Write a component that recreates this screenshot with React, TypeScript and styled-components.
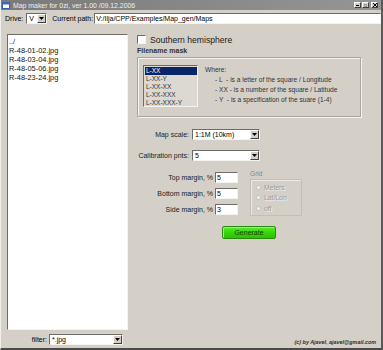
import React from "react"
import styled, { createGlobalStyle } from "styled-components"

const GlobalStyle = createGlobalStyle`
    html, body {
        margin: 0;
        padding: 0;
        background: #d4d0c8;
    }
    body {
        font-family: "Liberation Sans", Arial, sans-serif;
    }
`

const Window = styled.div`
    width: 383px;
    height: 350px;
    box-sizing: border-box;
    display: flex;
    flex-direction: column;
    background: #d4d0c8;
    border-left: 1px solid #f2f0ec;
    border-right: 2px solid #5a5a5a;
    border-bottom: 2px solid #4a4a4a;
    font-family: "Liberation Sans", Arial, sans-serif;
    font-size: 7px;
    color: #000;
`

const TitleBar = styled.div`
    height: 10px;
    display: flex;
    align-items: center;
    padding: 0 2px 0 1px;
    background: linear-gradient(to right, #7a7a7a, #959595);
    color: #f0f0f0;
    font-size: 6.9px;
    white-space: nowrap;
`

const TitleText = styled.span`
    margin-left: 3px;
    flex: 1;
`

const TitleButtons = styled.div`
    display: flex;
    gap: 1px;
    margin-right: 1px;
`

const TitleButton = styled.div<{ $gap?: boolean }>`
    width: 7px;
    height: 6px;
    box-sizing: border-box;
    background: #d4d0c8;
    border: 1px solid;
    border-color: #fff #404040 #404040 #fff;
    margin-left: ${(p) => (p.$gap ? "1px" : "0")};
    display: flex;
    align-items: center;
    justify-content: center;
`

const PathRow = styled.div`
    height: 17px;
    display: flex;
    align-items: center;
    padding-left: 4px;
    white-space: nowrap;
`

const Label = styled.span<{ $ml?: number }>`
    margin-left: ${(p) => p.$ml || 0}px;
    white-space: nowrap;
`

const Sunken = styled.div`
    box-sizing: border-box;
    background: #fff;
    border: 1px solid;
    border-color: #6e6c68 #f4f3f0 #f4f3f0 #6e6c68;
`

const TextBox = styled(Sunken)<{ $w?: number }>`
    height: 11px;
    width: ${(p) => (p.$w ? `${p.$w}px` : "auto")};
    flex: ${(p) => (p.$w ? "none" : "1")};
    padding-left: 1px;
    line-height: 9px;
    font-size: 7px;
    overflow: hidden;
    white-space: nowrap;
`

const SelectBox = styled(Sunken)<{ $w: number }>`
    width: ${(p) => p.$w}px;
    height: 11px;
    display: flex;
    align-items: stretch;
    line-height: 9px;
    font-size: 7px;
`

const SelectValue = styled.span`
    flex: 1;
    padding-left: 2px;
    overflow: hidden;
    white-space: nowrap;
`

const ArrowButton = styled.div`
    width: 9px;
    box-sizing: border-box;
    background: #d4d0c8;
    border: 1px solid;
    border-color: #fff #404040 #404040 #fff;
    display: flex;
    align-items: center;
    justify-content: center;
`

const Body = styled.div`
    flex: 1;
    display: flex;
    padding-top: 7px;
    min-height: 0;
`

const LeftColumn = styled.div`
    width: 121px;
    margin-left: 6px;
    display: flex;
    flex-direction: column;
`

const FileList = styled(Sunken)`
    flex: 1;
    padding: 2px 0 0 1px;
    font-size: 7.4px;
    line-height: 9px;
    color: #111;
`

const FilterRow = styled.div`
    height: 18px;
    display: flex;
    align-items: center;
    justify-content: flex-end;
    padding-right: 5px;
    gap: 2px;
`

const RightColumn = styled.div`
    flex: 1;
    margin-left: 9px;
    display: flex;
    flex-direction: column;
`

const CheckRow = styled.div`
    display: flex;
    align-items: center;
    margin-top: 1px;
    height: 9px;
`

const CheckBox = styled(Sunken)`
    width: 9px;
    height: 9px;
`

const CheckLabel = styled.span`
    margin-left: 4px;
    font-size: 8.6px;
    color: #1a1a1a;
`

const SectionTitle = styled.div`
    margin-top: 3px;
    font-size: 7px;
    font-weight: bold;
    line-height: 8px;
    color: #333;
`

const MaskGroup = styled.div`
    width: 224px;
    height: 60px;
    box-sizing: border-box;
    margin-top: 2px;
    border: 1px solid #a9a6a0;
    box-shadow: inset 1px 1px 0 #f4f3f0, 1px 1px 0 #f4f3f0;
    display: flex;
    align-items: flex-start;
    padding: 7px 0 0 5px;
`

const MaskList = styled(Sunken)`
    width: 55px;
    height: 42px;
    background: #dcd9d3;
    padding: 1px 0 0 1px;
    font-size: 6.5px;
    line-height: 8px;
    color: #333;
`

const MaskItem = styled.div<{ $selected?: boolean }>`
    padding-left: 1px;
    height: 8px;
    background: ${(p) => (p.$selected ? "#0a246a" : "transparent")};
    color: ${(p) => (p.$selected ? "#fff" : "inherit")};
`

const Legend = styled.div`
    margin-left: 7px;
    font-size: 6.6px;
    line-height: 10px;
    color: #333;
`

const LegendLine = styled.div`
    margin-left: 10px;
    white-space: pre;
`

const FormGrid = styled.div`
    margin-top: 12px;
    display: grid;
    grid-template-columns: 52px auto;
    column-gap: 3px;
    row-gap: 10px;
    align-items: center;
    justify-content: start;
`

const RightLabel = styled.span`
    text-align: right;
    white-space: nowrap;
    color: #1a1a1a;
`

const MarginSection = styled.div`
    margin-top: 9px;
    display: flex;
    align-items: flex-start;
`

const MarginGrid = styled.div`
    margin-top: 2px;
    display: grid;
    grid-template-columns: 76px 23px;
    column-gap: 2px;
    row-gap: 5px;
    align-items: center;
`

const GridPart = styled.div`
    margin-left: 12px;
    display: flex;
    flex-direction: column;
`

const GridTitle = styled.div`
    line-height: 7px;
    color: #8a8781;
    font-size: 6.6px;
`

const GridGroup = styled.div`
    margin-top: 2px;
    width: 52px;
    height: 37px;
    box-sizing: border-box;
    border: 1px solid #c2bfb9;
    box-shadow: inset 1px 1px 0 #ebe9e5;
    padding: 2px 0 0 5px;
`

const RadioRow = styled.div`
    display: flex;
    align-items: center;
    height: 10.5px;
    color: #9e9b95;
    text-shadow: 1px 1px 0 #f1f0ec;
    font-size: 6.8px;
`

const RadioDot = styled.span`
    width: 5px;
    height: 5px;
    border-radius: 50%;
    background: #f4f3f0;
    border: 1px solid #c3c0ba;
    box-sizing: border-box;
    margin-right: 3px;
`

const GenerateButton = styled.div`
    margin: 10px 0 0 85px;
    width: 54px;
    height: 13px;
    box-sizing: border-box;
    border: 1px solid #2b8a10;
    border-radius: 2px;
    background: linear-gradient(#5cec2c, #33d40b 55%, #2cc106);
    box-shadow: inset 1px 1px 0 #8ff56a;
    display: flex;
    align-items: center;
    justify-content: center;
    font-size: 7px;
    color: #143e0a;
`

const Footer = styled.div`
    margin-top: auto;
    margin-bottom: 2px;
    align-self: flex-end;
    margin-right: 5px;
    font-size: 5.4px;
    font-style: italic;
    font-weight: bold;
    line-height: 7px;
    color: #2c2c2c;
`

const DownArrow = () => (
    <svg width="5" height="3" viewBox="0 0 5 3">
        <path d="M0 0h5L2.5 3z" fill="#000" />
    </svg>
)

const Select: React.FC<{ value: string; width: number }> = ({ value, width }) => (
    <SelectBox $w={width}>
        <SelectValue>{value}</SelectValue>
        <ArrowButton>
            <DownArrow />
        </ArrowButton>
    </SelectBox>
)

const AppIcon = () => (
    <svg width="8" height="7" viewBox="0 0 8 7">
        <rect x="0.5" y="0.5" width="7" height="6" fill="#fff" stroke="#3a5fa8" />
        <rect x="0.5" y="0.5" width="7" height="2" fill="#3a6cc8" />
    </svg>
)

const files = ["../", "R-48-01-02.jpg", "R-48-03-04.jpg", "R-48-05-06.jpg", "R-48-23-24.jpg"]
const masks = ["L-XX", "L-XX-Y", "L-XX-XX", "L-XX-XXX", "L-XX-XXX-Y"]
const margins = [
    { label: "Top margin, %", value: "5" },
    { label: "Bottom margin, %", value: "5" },
    { label: "Side margin, %", value: "3" },
]

export default function App() {
    return (
        <>
            <GlobalStyle />
            <Window>
                <TitleBar>
                    <AppIcon />
                    <TitleText>Map maker for 0zi, ver 1.00 /09.12.2006</TitleText>
                    <TitleButtons>
                        <TitleButton>
                            <svg width="3" height="1"><rect width="3" height="1" fill="#000" /></svg>
                        </TitleButton>
                        <TitleButton>
                            <svg width="3" height="3"><rect x="0.5" y="0.5" width="2" height="2" fill="none" stroke="#9a9a9a" /></svg>
                        </TitleButton>
                        <TitleButton $gap>
                            <svg width="4" height="4" viewBox="0 0 4 4"><path d="M0 0L4 4M4 0L0 4" stroke="#000" strokeWidth="1" /></svg>
                        </TitleButton>
                    </TitleButtons>
                </TitleBar>

                <PathRow>
                    <Label>Drive:</Label>
                    <Label $ml={3} />
                    <Select value="V" width={21} />
                    <Label $ml={5}>Current path:</Label>
                    <Label $ml={1} />
                    <TextBox>V:/Ilja/CPP/Examples/Map_gen/Maps</TextBox>
                </PathRow>

                <Body>
                    <LeftColumn>
                        <FileList>
                            {files.map((f) => (
                                <div key={f}>{f}</div>
                            ))}
                        </FileList>
                        <FilterRow>
                            <Label>filter:</Label>
                            <Select value="*.jpg" width={74} />
                        </FilterRow>
                    </LeftColumn>

                    <RightColumn>
                        <CheckRow>
                            <CheckBox />
                            <CheckLabel>Southern hemisphere</CheckLabel>
                        </CheckRow>
                        <SectionTitle>Filename mask</SectionTitle>
                        <MaskGroup>
                            <MaskList>
                                {masks.map((m, i) => (
                                    <MaskItem key={m} $selected={i === 0}>
                                        {m}
                                    </MaskItem>
                                ))}
                            </MaskList>
                            <Legend>
                                <div>Where:</div>
                                <LegendLine>{"- L  - is a letter of the square / Longitude"}</LegendLine>
                                <LegendLine>{"- XX - is a number of the square / Latitude"}</LegendLine>
                                <LegendLine>{"- Y  - is a specification of the suare (1-4)"}</LegendLine>
                            </Legend>
                        </MaskGroup>

                        <FormGrid>
                            <RightLabel>Map scale:</RightLabel>
                            <Select value="1:1M (10km)" width={68} />
                            <RightLabel>Calibration pnts:</RightLabel>
                            <Select value="5" width={68} />
                        </FormGrid>

                        <MarginSection>
                            <MarginGrid>
                                {margins.map((m) => (
                                    <React.Fragment key={m.label}>
                                        <RightLabel>{m.label}</RightLabel>
                                        <TextBox $w={23}>{m.value}</TextBox>
                                    </React.Fragment>
                                ))}
                            </MarginGrid>
                            <GridPart>
                                <GridTitle>Grid</GridTitle>
                                <GridGroup>
                                    {["Meters", "Lat/Lon", "off"].map((r) => (
                                        <RadioRow key={r}>
                                            <RadioDot />
                                            {r}
                                        </RadioRow>
                                    ))}
                                </GridGroup>
                            </GridPart>
                        </MarginSection>

                        <GenerateButton>Generate</GenerateButton>

                        <Footer>(c) by Ajavel, ajavel@gmail.com</Footer>
                    </RightColumn>
                </Body>
            </Window>
        </>
    )
}
